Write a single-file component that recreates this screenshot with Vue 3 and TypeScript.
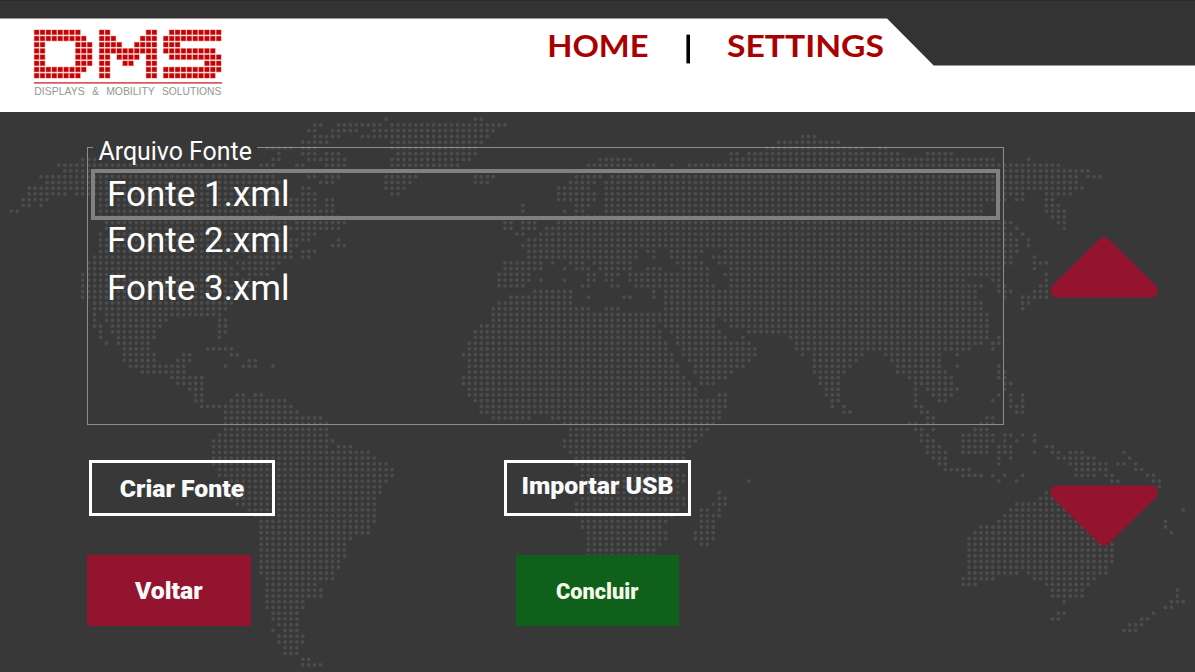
<script setup lang="ts">
import { ref } from 'vue'

interface Cell { x: number; y: number }

// Each line is one row of map dots: column indexes or inclusive column ranges.
const mapRows: string[] = [
  '63 78-79',
  '51-52 55-62 64-83',
  '50-51 54-58 61-81',
  '51-55 59-80 133-135',
  '49-53 64-79 129-139',
  '43-47 49-51 64-78 127-143 146-147',
  '45 49-51 53-55 65-78 121-122 124-149 154-158',
  '12-14 44-45 50-56 64-77 99-104 121-165 171',
  '8-32 34-36 42-44 48-49 53-56 64-75 97-108 111 114-176',
  '9-42 115-181',
  '5-44 50-51 53-55 63-68 78-81 95-99 101-106 108-179 181-183',
  '6-46 52-54 63-67 78-80 94-98 100-179',
  '3-44 49-50 63-66 92-97 100-180',
  '3-9 11-46 49-51 64-65 92-98 100-170 174-178',
  '2-6 15-45 47-51 53-54 92-98 100-167 169-170 174-175',
  '2-3 5 15-45 47-51 53-54 86 95-97 100-163 174-176',
  '0-1 15-41 47-54 86 93 95-96 100-163 174-177',
  '15-44 48-55 95-163 175-177',
  '16-46 48-56 83-84 86-88 92-168 176-177',
  '16-55 83-84 86-88 90-167 169 177',
  '15 17-46 49-51 85-86 89-168 170',
  '15-45 47-50 55 87-169 171',
  '15-48 54-56 86-169 171',
  '15-47 49-51 87-105 107-108 111-116 120-169',
  '14-35 37 40-47 49-50 87-105 108 111-115 118-168 172',
  '13-36 38-45 83-89 91 94-96 98-104 112-116 119-168 172-174',
  '13-37 39-44 83-89 93 95-97 99-104 107-109 113-117 121-166 172',
  '12-38 40-43 82-87 97-98 100-102 104-117 120-166 174',
  '12-36 39-40 82-87 89 93 97-98 100-101 104-117 121-160 165-166 174',
  '12-40 82-86 96-97 101-102 105-118 121-163 166-167 173-174',
  '12-38 88-94 108 110-162 166-168 172-174',
  '12-37 84-94 97 103-104 108 110-162 167 170-174',
  '14-37 82-94 110-163 170-171',
  '14-36 81-97 100-102 110-163 170',
  '14 16-35 81-164',
  '14 16-26 35-36 81-118 120-164',
  '14-15 17-25 35-36 79-108 110-118 121-164',
  '15 17-24 35-36 78-109 111-119 124-164',
  '15 18-24 35 78-109 112-120 123 131-164 166',
  '16 18-23 77-110 112-124 132-163 165-166',
  '19-23 33-37 77-110 113-125 132-161 165',
  '19-24 29-30 37-38 76-111 113-125 133 135-143 147-156 159',
  '19-24 28-30 40-41 77-111 114-124 135-142 148-156',
  '20-29 36 39-41 44 77-112 115-123 135-141 149-156 159 166',
  '22-29 77-112 115-121 135-140 149-157 166-167',
  '27-32 76-113 116-120 136-139 151-158 166-167',
  '28-32 76-114 116-118 136-139 152-158 167-168',
  '30-32 77-115 137-139 152 154-159 167',
  '31-32 38-39 41-42 77-115 119-120 137-139 152 155-158 166 168 170',
  '31-32 37-46 78-120 138-139 152 156-157 165 168 170',
  '32-47 79-120 138 140 152-153 168-170',
  '36-48 79-119 140-141 153-154 169-170',
  '36-52 81-87 91-119 154-155 164-165',
  '36-53 93-118 151-152 154-155 163-165',
  '36-53 94-117 152-153 155 162-164',
  '35-53 94-116 153-154 160-165 167-168 170 172',
  '34-54 93-115 153-155 160-165 167 169 172',
  '34-53 55-57 93-114 154-156 160-164 166-168 174-175',
  '34-60 94-113 154-157 160-164 166-168 172 175-176 178-180 187',
  '34-61 95-113 155-157 166 168 176-182 188',
  '34-63 95-112 156-157 166 178-184 186-187 189',
  '35-64 96-112 157-161 179-184 189-190',
  '35-64 96-113 160-163 165 167 170 179-182 184-185 191-192',
  '37-63 96-113 124 166 169 185-186 192-193',
  '38-62 96-112 193',
  '37-62 96-112 119 174-181',
  '37-61 96-113 119-120 173-180',
  '38-61 95-113 118-120 169-178',
  '40-61 95-112 116-117 119 168-178 197',
  '41-61 95-111 116-119 167-179',
  '42-61 96-110 116-118 166-179 194',
  '42-60 96-109 116-118 163-180 194',
  '42-60 97-110 115-118 162-181 195',
  '42-57 97-110 115-118 161-182',
  '42-56 97-109 116-117 161-185',
  '42-56 97-108 161-185',
  '42-56 97-108 161-185',
  '42-55 97-107 161-185',
  '42-55 161-184',
  '42-54 161-169 171-184',
  '43-54 160-165 172-182',
  '43-51 160-162 174-181',
  '43-52 175-180 196',
  '43-52 175-180 196',
  '43-49 177 195-197',
  '43-49 194-195',
  '44-48 176-177 192',
  '44-48 175-176 190-191',
  '45-48 188-190',
  '44 46-48 187-189',
  '45-49',
  '45-49',
  '46-48',
  '46-48',
  '49-50',
  '49-52',
]

function dotRow(line: string, row: number): string {
  return line.split(' ').map((part) => {
    const [from, to = from] = part.split('-').map(Number)
    let d = ''
    for (let c = from; c <= to; c++) {
      d += `M${(11.3 + c * 5.949).toFixed(2)} ${(7.2 + row * 5.744).toFixed(2)}h0`
    }
    return d
  }).join('')
}
const mapPath = mapRows.map(dotRow).join('')

interface Glyph { x: number; pitch: number; rows: string[] }
const glyphs: Glyph[] = [
  { x: 36.6, pitch: 5.9, rows: ['11111111..', '111111111.', '11.....111', '11.....111', '11.....111', '11.....111', '111111111.', '11111111..'] },
  { x: 101.7, pitch: 5.85, rows: ['11......11', '111....111', '1111..1111', '1111111111', '11.1111.11', '11..11..11', '11......11', '11......11'] },
  { x: 165.8, pitch: 5.88, rows: ['.111111111', '1111111111', '111.......', '111111111.', '.111111111', '.......111', '1111111111', '111111111.'] },
]
const logoCells: Cell[] = glyphs.flatMap((g) =>
  g.rows.flatMap((row, r) =>
    [...row].flatMap((ch, c) => (ch === '1' ? [{ x: g.x + c * g.pitch, y: 32.3 + r * 6.2 }] : [])),
  ),
)

const files = ['Fonte 1.xml', 'Fonte 2.xml', 'Fonte 3.xml']
const selected = ref(0)

function move(step: number): void {
  selected.value = Math.min(files.length - 1, Math.max(0, selected.value + step))
}
</script>

<template>
  <div class="screen">
    <header class="header">
      <svg class="header-shape" width="1195" height="112" aria-hidden="true">
        <rect width="1195" height="112" fill="#fff" />
        <path d="M0 0H1195V65.6H933.7L887 18.6H0Z" fill="#333" />
        <path d="M0 .5H1195" stroke="#2b2b2b" />
      </svg>
      <svg class="logo" width="240" height="112" role="img" aria-label="DMS">
        <g v-for="(cell, i) in logoCells" :key="i">
          <rect :x="cell.x - 2.8" :y="cell.y - 2.8" width="5.6" height="5.6" fill="#eea0a0" />
          <rect :x="cell.x - 2.25" :y="cell.y - 2.25" width="4.5" height="4.5" fill="#c40404" />
        </g>
        <rect x="34" y="82.2" width="188" height="1.4" fill="#cf3434" />
        <text class="tagline" x="34.3" y="95" textLength="50.5" lengthAdjust="spacingAndGlyphs">DISPLAYS</text>
        <text class="tagline" x="92.3" y="95" textLength="6.8" lengthAdjust="spacingAndGlyphs">&amp;</text>
        <text class="tagline" x="106.2" y="95" textLength="48.5" lengthAdjust="spacingAndGlyphs">MOBILITY</text>
        <text class="tagline" x="162" y="95" textLength="59.4" lengthAdjust="spacingAndGlyphs">SOLUTIONS</text>
      </svg>
      <nav class="nav">
        <svg width="400" height="60">
          <text class="nav-text" x="7.2" y="40.4" textLength="101.4" lengthAdjust="spacingAndGlyphs">HOME</text>
          <rect x="146.4" y="17.6" width="3.6" height="28.8" fill="#000" />
          <text class="nav-text" x="187" y="40.4" textLength="157" lengthAdjust="spacingAndGlyphs">SETTINGS</text>
        </svg>
      </nav>
    </header>

    <main class="main">
      <svg class="map" width="1195" height="560" aria-hidden="true">
        <path :d="mapPath" fill="none" stroke="#4c4c4c" stroke-width="3.8" stroke-linecap="round" />
      </svg>

      <div class="left">
        <fieldset class="panel">
          <legend class="legend"><span>Arquivo Fonte</span></legend>
          <ul class="list">
            <li
              v-for="(file, i) in files"
              :key="file"
              class="item"
              :class="{ selected: i === selected }"
              @click="selected = i"
            >{{ file }}</li>
          </ul>
        </fieldset>

        <div class="row outline-row">
          <button class="btn outline create">Criar Fonte</button>
          <button class="btn outline import">Importar USB</button>
        </div>
        <div class="row action-row">
          <button class="btn solid back">Voltar</button>
          <button class="btn solid done">Concluir</button>
        </div>
      </div>

      <div class="arrows">
        <button class="arrow" aria-label="Acima" @click="move(-1)">
          <svg width="110" height="62"><path d="M8.3 54.4H102L55 8.4Z" /></svg>
        </button>
        <button class="arrow" aria-label="Abaixo" @click="move(1)">
          <svg width="110" height="62"><path d="M8.3 7.6H102L55 53.6Z" /></svg>
        </button>
      </div>
    </main>
  </div>
</template>

<style>
body {
  margin: 0;
  overflow: hidden;
  background: #383838;
}
</style>

<style scoped>
.screen {
  width: 1195px;
  height: 672px;
  overflow: hidden;
  display: flex;
  flex-direction: column;
  background: #383838;
  font-family: Roboto, "Liberation Sans", sans-serif;
  color: #fff;
}
.header {
  position: relative;
  display: flex;
  height: 112px;
  flex: none;
}
.header-shape {
  position: absolute;
  inset: 0;
}
.logo,
.nav {
  position: relative;
}
.nav {
  margin: 17px 0 0 300px;
}
.tagline {
  font: 11.5px "Liberation Sans", sans-serif;
  fill: #949494;
}
.nav-text {
  font: 700 30px Lato, sans-serif;
  fill: #a90000;
}
.main {
  position: relative;
  flex: 1;
  display: flex;
}
.map {
  position: absolute;
  inset: 0;
}
.left {
  position: relative;
  width: 917px;
  margin-left: 87px;
  padding-top: 27px;
}
.panel {
  box-sizing: border-box;
  width: 917px;
  height: 286px;
  margin: 0;
  padding: 0 3px;
  border: 1px solid #8c8c8c;
}
.legend {
  height: 17px;
  margin-left: 2px;
  padding: 0 5px 0 5.5px;
  font-size: 24.9px;
  line-height: 26px;
}
.legend span {
  display: block;
  width: 153.5px;
  white-space: nowrap;
}
.list {
  list-style: none;
  margin: 13px 0 0;
  padding: 0;
}
.item {
  box-sizing: border-box;
  height: 48px;
  padding-left: 16px;
  font-size: 35px;
  line-height: 47px;
  white-space: nowrap;
}
.item.selected {
  height: 51px;
  margin-bottom: -3px;
  padding-left: 12px;
  border: 4px solid #808080;
  line-height: 43px;
}
.row {
  display: flex;
}
.outline-row {
  gap: 229px;
  margin: 35px 0 0 2px;
}
.action-row {
  gap: 265px;
  margin-top: 39px;
}
.btn {
  box-sizing: border-box;
  margin: 0;
  padding: 0;
  border: 0;
  background: none;
  color: #fafafa;
  font: 900 24.8px Roboto, "Liberation Sans", sans-serif;
  white-space: nowrap;
}
.outline {
  width: 186px;
  height: 56px;
  border: 3px solid #fff;
}
.import {
  width: 187px;
  padding-bottom: 5px;
}
.solid {
  width: 163.5px;
  height: 71px;
}
.back {
  background: #94132f;
}
.done {
  padding-top: 2px;
  background: #0f601a;
  color: #f6fbe9;
  font-size: 21.7px;
}
.arrows {
  position: relative;
  display: flex;
  flex-direction: column;
  gap: 187px;
  margin: 124px 0 0 45px;
}
.arrow {
  display: block;
  width: 110px;
  height: 62px;
  margin: 0;
  padding: 0;
  border: 0;
  background: none;
}
.arrow svg {
  display: block;
}
.arrow path {
  fill: #94132f;
  stroke: #94132f;
  stroke-width: 14;
  stroke-linejoin: round;
}
</style>
